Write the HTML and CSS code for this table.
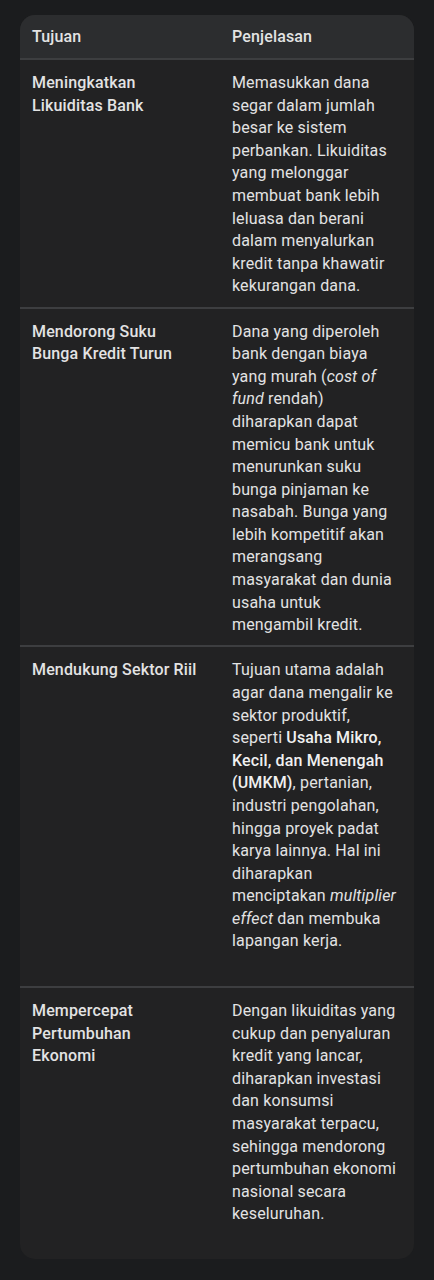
FILE: index.html
```html
<!DOCTYPE html>
<html lang="id">
<head>
<meta charset="utf-8">
<link rel="stylesheet" href="styles.css">
</head>
<body>
<div class="card">
  <div class="row head">
    <div class="cell c1">Tujuan</div>
    <div class="cell c2">Penjelasan</div>
  </div>
  <div class="row">
    <div class="cell c1 strong">Meningkatkan Likuiditas Bank</div>
    <div class="cell c2">Memasukkan dana segar dalam jumlah besar ke sistem perbankan. Likuiditas yang melonggar membuat bank lebih leluasa dan berani dalam menyalurkan kredit tanpa khawatir kekurangan dana.</div>
  </div>
  <div class="row">
    <div class="cell c1 strong">Mendorong Suku Bunga Kredit Turun</div>
    <div class="cell c2">Dana yang diperoleh bank dengan biaya yang murah (<em>cost of fund</em> rendah) diharapkan dapat memicu bank untuk menurunkan suku bunga pinjaman ke nasabah. Bunga yang lebih kompetitif akan merangsang masyarakat dan dunia usaha untuk mengambil kredit.</div>
  </div>
  <div class="row extra">
    <div class="cell c1 strong">Mendukung Sektor Riil</div>
    <div class="cell c2">Tujuan utama adalah agar dana mengalir ke sektor produktif, seperti <b>Usaha Mikro, Kecil, dan Menengah (UMKM)</b>, pertanian, industri pengolahan, hingga proyek padat karya lainnya. Hal ini diharapkan menciptakan <em>multiplier effect</em> dan membuka lapangan kerja.</div>
  </div>
  <div class="row extra">
    <div class="cell c1 strong">Mempercepat Pertumbuhan Ekonomi</div>
    <div class="cell c2">Dengan likuiditas yang cukup dan penyaluran kredit yang lancar, diharapkan investasi dan konsumsi masyarakat terpacu, sehingga mendorong pertumbuhan ekonomi nasional secara keseluruhan.</div>
  </div>
</div>
</body>
</html>
```
FILE: styles.css
```css
html, body {
  margin: 0;
  padding: 0;
  background: #1b1c1e;
}
body {
  padding: 15px 20px 21px 20px;
  font-family: Roboto, "Noto Sans", sans-serif;
  font-size: 16px;
  letter-spacing: 0.15px;
  line-height: 22.6px;
  color: #e3e3e3;
}
.card {
  background: #222223;
  border-radius: 15px;
  overflow: hidden;
}
.row {
  display: grid;
  grid-template-columns: 200px 1fr;
  border-top: 2px solid #3d3e40;
}
.row.head {
  border-top: none;
  background: #2c2d2f;
}
.cell {
  padding: 12px 12px 8.5px 12px;
}
.c1 {
  padding-right: 22px;
}
.head .cell {
  padding: 11px 12px 9.5px 12px;
  font-weight: 500;
}
.strong {
  font-weight: 500;
}
.c2 b {
  font-weight: 500;
  color: #f0f0f0;
}
.c2 em {
  font-style: italic;
}
.row.extra .cell {
  padding-bottom: 33px;
}
```
